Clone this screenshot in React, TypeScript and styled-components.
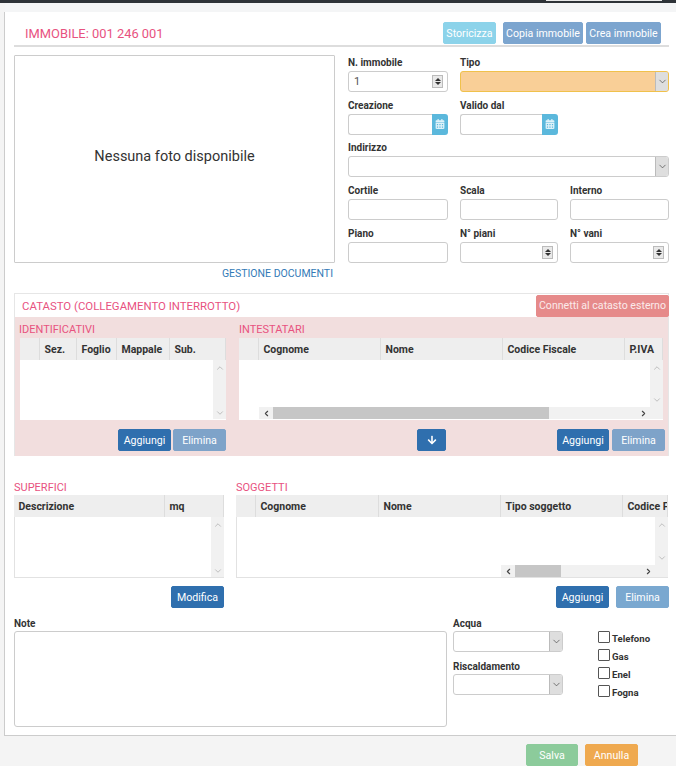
import styled, { createGlobalStyle } from "styled-components";
import { ChevronDown, ChevronLeft, ChevronRight, ChevronUp } from "lucide-react";
import { FaArrowDown, FaCalendarAlt } from "react-icons/fa";

const GlobalStyle = createGlobalStyle`
  html, body {
    margin: 0;
    padding: 0;
    background: #f4f4f4;
  }
  body {
    font-family: Roboto, "Liberation Sans", sans-serif;
    color: #333;
    overflow: hidden;
  }
  * {
    box-sizing: border-box;
  }
`;

const Page = styled.div`
  width: 676px;
  height: 766px;
  overflow: hidden;
  background: #f4f4f4;
`;

const TopBar = styled.div`
  height: 3px;
  background: #2e3338;
  display: flex;
  justify-content: flex-end;
  padding-right: 14px;
`;

const TopTab = styled.div`
  width: 116px;
  height: 1px;
  background: #e8e8e8;
`;

const Strip = styled.div`
  height: 9px;
  margin-left: 5px;
  background: #f4f5f6;
`;

const Sheet = styled.div`
  margin-left: 4px;
  height: 724px;
  background: #fff;
  border-left: 1px solid #ccc;
  border-bottom: 1px solid #ccc;
  padding: 10px 7px 0 9px;
`;

const Header = styled.div`
  height: 25px;
  display: flex;
  align-items: flex-start;
  justify-content: space-between;
  padding: 0 8px 0 11px;
  border-bottom: 2px solid #ddd;
`;

const Title = styled.div`
  font-size: 12.9px;
  line-height: 24px;
  color: #e8527f;
`;

const ButtonGroup = styled.div<{ $gap?: number }>`
  display: flex;
  gap: ${({ $gap }) => $gap ?? 3}px;
`;

const Button = styled.button<{ $bg: string; $w: number; $fg?: string; $mr?: number }>`
  width: ${({ $w }) => $w}px;
  height: 22px;
  margin-right: ${({ $mr }) => $mr ?? 0}px;
  padding: 0;
  border: 1px solid ${({ $bg }) => $bg};
  border-radius: 2px;
  background: ${({ $bg }) => $bg};
  color: ${({ $fg }) => $fg ?? "#fff"};
  font-family: inherit;
  font-size: 10.6px;
  white-space: nowrap;
  display: flex;
  align-items: center;
  justify-content: center;
`;

const TopSection = styled.div`
  margin-top: 8px;
  height: 238px;
  display: grid;
  grid-template-columns: 321px 321px;
  column-gap: 13px;
`;

const PhotoColumn = styled.div`
  display: flex;
  flex-direction: column;
`;

const Photo = styled.div`
  height: 208px;
  padding-bottom: 6px;
  border: 1px solid #ccc;
  border-radius: 1px;
  display: flex;
  align-items: center;
  justify-content: center;
  font-size: 14.5px;
  color: #333;
`;

const DocLink = styled.a`
  align-self: flex-end;
  margin: 5px 2px 0 0;
  font-size: 10.5px;
  line-height: 12px;
  color: #337ab7;
`;

const FormGrid = styled.div`
  display: grid;
  grid-template-columns: 100px 98px 99px;
  grid-auto-rows: 42.7px;
  column-gap: 12px;
`;

const Field = styled.div<{ $span?: number }>`
  grid-column: span ${({ $span }) => $span ?? 1};
  display: flex;
  flex-direction: column;
`;

const Label = styled.label`
  display: block;
  height: 16px;
  font-size: 10px;
  font-weight: 700;
  line-height: 16px;
  color: #333;
`;

const LowLabel = styled(Label)`
  line-height: 18px;
`;

const Control = styled.div<{ $bg?: string; $border?: string }>`
  width: 100%;
  height: 21px;
  border: 1px solid ${({ $border }) => $border ?? "#ccc"};
  border-radius: 3px;
  background: ${({ $bg }) => $bg ?? "#fff"};
  display: flex;
  align-items: center;
  justify-content: space-between;
  font-size: 11px;
  color: #555;
  padding-left: 5px;
`;

const SpinBox = styled.div`
  width: 11px;
  height: 13px;
  margin-right: 4px;
  border: 1px solid #bbb;
  background: #e9e9e9;
  display: flex;
  flex-direction: column;
  align-items: center;
  justify-content: space-around;
  padding: 1px 0;
`;

const TriUp = styled.span`
  width: 0;
  height: 0;
  border-left: 3px solid transparent;
  border-right: 3px solid transparent;
  border-bottom: 3px solid #333;
`;

const TriDown = styled(TriUp)`
  border-bottom: 0;
  border-top: 3px solid #333;
`;

const SelectArrow = styled.div`
  width: 13px;
  height: 19px;
  border-left: 1px solid #bbb;
  background: #dedede;
  border-radius: 0 2px 2px 0;
  color: #444;
  display: flex;
  align-items: center;
  justify-content: center;
`;

const DateGroup = styled.div`
  display: flex;
`;

const DateInput = styled.div<{ $w: number }>`
  width: ${({ $w }) => $w}px;
  height: 21px;
  border: 1px solid #ccc;
  border-right: 0;
  border-radius: 3px 0 0 3px;
  background: #fff;
`;

const DateAddon = styled.div`
  width: 16px;
  height: 21px;
  background: #5bb8dc;
  border-radius: 0 3px 3px 0;
  color: #dff2f9;
  display: flex;
  align-items: center;
  justify-content: center;
`;

const Catasto = styled.section`
  height: 163px;
  border: 1px solid #e6e6e6;
  border-bottom: 0;
  display: flex;
  flex-direction: column;
`;

const CatastoHead = styled.div`
  height: 23px;
  display: flex;
  align-items: center;
  justify-content: space-between;
  padding-left: 7px;
`;

const CatastoTitle = styled.div`
  font-size: 11.4px;
  color: #e8527f;
`;

const CatastoBody = styled.div`
  flex: 1;
  background: #f2dede;
  padding: 6px 3px 0 4px;
`;

const TwoTables = styled.div<{ $left: number; $gap: number }>`
  display: grid;
  grid-template-columns: ${({ $left }) => $left}px 1fr;
  column-gap: ${({ $gap }) => $gap}px;
`;

const Section = styled.div`
  min-width: 0;
`;

const SectionTitle = styled.div<{ $lh?: number }>`
  height: 15px;
  font-size: 11px;
  line-height: ${({ $lh }) => $lh ?? 13}px;
  color: #e8527f;
`;

const TableBox = styled.div<{ $h: number; $ml?: number; $mr?: number; $framed?: boolean }>`
  height: ${({ $h }) => $h}px;
  margin-left: ${({ $ml }) => $ml ?? 0}px;
  margin-right: ${({ $mr }) => $mr ?? 0}px;
  background: #fff;
  border-bottom: 1px solid ${({ $framed }) => ($framed ? "#e2e2e2" : "transparent")};
  display: flex;
  flex-direction: column;
  overflow: hidden;
`;

const HeadRow = styled.div<{ $cols: string }>`
  height: 22px;
  flex: none;
  display: grid;
  grid-template-columns: ${({ $cols }) => $cols};
  background: #eee;
  overflow: hidden;
`;

const HeadCell = styled.div`
  padding-left: 4.5px;
  border-right: 1px solid #ddd;
  font-size: 10.5px;
  font-weight: 700;
  line-height: 23px;
  white-space: nowrap;
  overflow: hidden;
  color: #333;
`;

const TableRest = styled.div<{ $framed?: boolean }>`
  flex: 1;
  display: flex;
  min-height: 0;
  border-left: ${({ $framed }) => ($framed ? "1px solid #e2e2e2" : "0")};
`;

const RowsArea = styled.div`
  flex: 1;
  min-width: 0;
  display: flex;
  flex-direction: column;
  justify-content: flex-end;
`;

const VScroll = styled.div<{ $corner?: boolean }>`
  width: 13px;
  flex: none;
  background: #f1f1f1;
  color: #b5b5b5;
  display: flex;
  flex-direction: column;
  align-items: center;
  justify-content: space-between;
  padding: 3px 0 ${({ $corner }) => ($corner ? 14 : 1)}px;
`;

const HScroll = styled.div<{ $ml: number }>`
  height: 12px;
  margin-left: ${({ $ml }) => $ml}px;
  background: #f1f1f1;
  display: flex;
  align-items: center;
  color: #444;
`;

const HArrow = styled.div`
  width: 14px;
  flex: none;
  display: flex;
  justify-content: center;
`;

const HThumb = styled.div<{ $w: number }>`
  width: ${({ $w }) => $w}px;
  height: 12px;
  background: #c6c6c6;
`;

const HSpacer = styled.div`
  flex: 1;
`;

const CatastoActions = styled.div`
  margin-top: 9px;
  display: grid;
  grid-template-columns: 207px 191px 29px 1fr;
  align-items: center;
`;

const ActionsEnd = styled.div<{ $gap?: number }>`
  display: flex;
  justify-content: flex-end;
  gap: ${({ $gap }) => $gap ?? 2}px;
`;

const LowerTables = styled.div`
  margin-top: 24px;
`;

const LowerActions = styled.div`
  margin-top: 8px;
  display: flex;
  justify-content: space-between;
  padding-left: 157px;
`;

const NotesSection = styled.div`
  margin-top: 7px;
  display: grid;
  grid-template-columns: 433px 110px 1fr;
  column-gap: 6px;
`;

const NotesBox = styled.div`
  height: 96px;
  border: 1px solid #ccc;
  border-radius: 3px;
  background: #fff;
`;

const SelectStack = styled.div`
  display: flex;
  flex-direction: column;
  gap: 5.5px;
`;

const ChecksColumn = styled.div`
  margin: 17px 0 0 29px;
  display: flex;
  flex-direction: column;
  gap: 5px;
`;

const CheckRow = styled.div`
  height: 13px;
  display: flex;
  align-items: center;
  gap: 2px;
  font-size: 9.6px;
  font-weight: 700;
  color: #333;
`;

const CheckBox = styled.span`
  width: 12px;
  height: 12px;
  flex: none;
  border: 1px solid #555;
  border-radius: 1px;
  background: #fff;
  margin-top: -4px;
`;

const Footer = styled.div`
  height: 30px;
  display: flex;
  justify-content: flex-end;
  align-items: flex-start;
  gap: 7px;
  padding: 8px 38px 0 0;
`;

const Spinner = () => (
  <SpinBox>
    <TriUp />
    <TriDown />
  </SpinBox>
);

const Arrow = () => (
  <SelectArrow>
    <ChevronDown size={11} strokeWidth={1.5} />
  </SelectArrow>
);

const DateField = ({ width }: { width: number }) => (
  <DateGroup>
    <DateInput $w={width} />
    <DateAddon>
      <FaCalendarAlt size={10} />
    </DateAddon>
  </DateGroup>
);

type TableProps = {
  h: number;
  cols: string;
  heads: string[];
  ml?: number;
  mr?: number;
  framed?: boolean;
  scroll?: { ml: number; thumb: number };
};

const DataTable = ({ h, cols, heads, ml, mr, framed, scroll }: TableProps) => (
  <TableBox $h={h} $ml={ml} $mr={mr} $framed={framed}>
    <HeadRow $cols={cols}>
      {heads.map((head, i) => (
        <HeadCell key={i}>{head}</HeadCell>
      ))}
    </HeadRow>
    <TableRest $framed={framed}>
      <RowsArea>
        {scroll && (
          <HScroll $ml={scroll.ml}>
            <HArrow>
              <ChevronLeft size={9} strokeWidth={3} />
            </HArrow>
            <HThumb $w={scroll.thumb} />
            <HSpacer />
            <HArrow>
              <ChevronRight size={9} strokeWidth={3} />
            </HArrow>
          </HScroll>
        )}
      </RowsArea>
      <VScroll $corner={!!scroll}>
        <ChevronUp size={10} strokeWidth={2} />
        <ChevronDown size={10} strokeWidth={2} />
      </VScroll>
    </TableRest>
  </TableBox>
);

const checks = ["Telefono", "Gas", "Enel", "Fogna"];

export default function App() {
  return (
    <Page>
      <GlobalStyle />
      <TopBar>
        <TopTab />
      </TopBar>
      <Strip />
      <Sheet>
        <Header>
          <Title>IMMOBILE: 001 246 001</Title>
          <ButtonGroup>
            <Button $bg="#8cd3ea" $w={53} $mr={4}>Storicizza</Button>
            <Button $bg="#7ca5cf" $w={80}>Copia immobile</Button>
            <Button $bg="#7ca5cf" $w={75}>Crea immobile</Button>
          </ButtonGroup>
        </Header>

        <TopSection>
          <PhotoColumn>
            <Photo>Nessuna foto disponibile</Photo>
            <DocLink>GESTIONE DOCUMENTI</DocLink>
          </PhotoColumn>
          <FormGrid>
            <Field>
              <Label>N. immobile</Label>
              <Control>
                1
                <Spinner />
              </Control>
            </Field>
            <Field $span={2}>
              <Label>Tipo</Label>
              <Control $bg="#f9cf97" $border="#f0c14b">
                <span />
                <Arrow />
              </Control>
            </Field>
            <Field>
              <Label>Creazione</Label>
              <DateField width={84} />
            </Field>
            <Field $span={2}>
              <Label>Valido dal</Label>
              <DateField width={82} />
            </Field>
            <Field $span={3}>
              <Label>Indirizzo</Label>
              <Control>
                <span />
                <Arrow />
              </Control>
            </Field>
            <Field>
              <Label>Cortile</Label>
              <Control />
            </Field>
            <Field>
              <Label>Scala</Label>
              <Control />
            </Field>
            <Field>
              <Label>Interno</Label>
              <Control />
            </Field>
            <Field>
              <Label>Piano</Label>
              <Control />
            </Field>
            <Field>
              <Label>N° piani</Label>
              <Control>
                <span />
                <Spinner />
              </Control>
            </Field>
            <Field>
              <Label>N° vani</Label>
              <Control>
                <span />
                <Spinner />
              </Control>
            </Field>
          </FormGrid>
        </TopSection>

        <Catasto>
          <CatastoHead>
            <CatastoTitle>CATASTO (COLLEGAMENTO INTERROTTO)</CatastoTitle>
            <Button $bg="#e68a8a" $w={133} $fg="#fbeaea" $mr={-1}>Connetti al catasto esterno</Button>
          </CatastoHead>
          <CatastoBody>
            <TwoTables $left={207} $gap={13}>
              <Section>
                <SectionTitle>IDENTIFICATIVI</SectionTitle>
                <DataTable
                  h={82}
                  ml={1}
                  cols="20px 37px 40px 53px 1fr"
                  heads={["", "Sez.", "Foglio", "Mappale", "Sub."]}
                />
              </Section>
              <Section>
                <SectionTitle>INTESTATARI</SectionTitle>
                <DataTable
                  h={82}
                  mr={2}
                  cols="20px 122px 122px 122px 1fr"
                  heads={["", "Cognome", "Nome", "Codice Fiscale", "P.IVA"]}
                  scroll={{ ml: 20, thumb: 276 }}
                />
              </Section>
            </TwoTables>
            <CatastoActions>
              <ActionsEnd>
                <Button $bg="#2f6fae" $w={53}>Aggiungi</Button>
                <Button $bg="#7ea3c9" $w={53}>Elimina</Button>
              </ActionsEnd>
              <span />
              <Button $bg="#2f6fae" $w={29}>
                <FaArrowDown size={10} />
              </Button>
              <ActionsEnd $gap={3}>
                <Button $bg="#2f6fae" $w={52}>Aggiungi</Button>
                <Button $bg="#7ea3c9" $w={53}>Elimina</Button>
              </ActionsEnd>
            </CatastoActions>
          </CatastoBody>
        </Catasto>

        <LowerTables>
          <TwoTables $left={210} $gap={12}>
            <Section>
              <SectionTitle $lh={16}>SUPERFICI</SectionTitle>
              <DataTable framed h={83} cols="151px 1fr" heads={["Descrizione", "mq"]} />
            </Section>
            <Section>
              <SectionTitle $lh={16}>SOGGETTI</SectionTitle>
              <DataTable
                framed
                h={83}
                mr={1}
                cols="20px 123px 122px 122px 1fr"
                heads={["", "Cognome", "Nome", "Tipo soggetto", "Codice Fiscale"]}
                scroll={{ ml: 264, thumb: 46 }}
              />
            </Section>
          </TwoTables>
          <LowerActions>
            <Button $bg="#2f6fae" $w={53}>Modifica</Button>
            <ButtonGroup $gap={7}>
              <Button $bg="#2f6fae" $w={53}>Aggiungi</Button>
              <Button $bg="#7aa8d0" $w={53}>Elimina</Button>
            </ButtonGroup>
          </LowerActions>
        </LowerTables>

        <NotesSection>
          <div>
            <LowLabel>Note</LowLabel>
            <NotesBox />
          </div>
          <SelectStack>
            <div>
              <LowLabel>Acqua</LowLabel>
              <Control>
                <span />
                <Arrow />
              </Control>
            </div>
            <div>
              <LowLabel>Riscaldamento</LowLabel>
              <Control>
                <span />
                <Arrow />
              </Control>
            </div>
          </SelectStack>
          <ChecksColumn>
            {checks.map((name) => (
              <CheckRow key={name}>
                <CheckBox />
                {name}
              </CheckRow>
            ))}
          </ChecksColumn>
        </NotesSection>
      </Sheet>
      <Footer>
        <Button $bg="#8ccb9b" $w={52}>Salva</Button>
        <Button $bg="#efa94f" $w={53}>Annulla</Button>
      </Footer>
    </Page>
  );
}
